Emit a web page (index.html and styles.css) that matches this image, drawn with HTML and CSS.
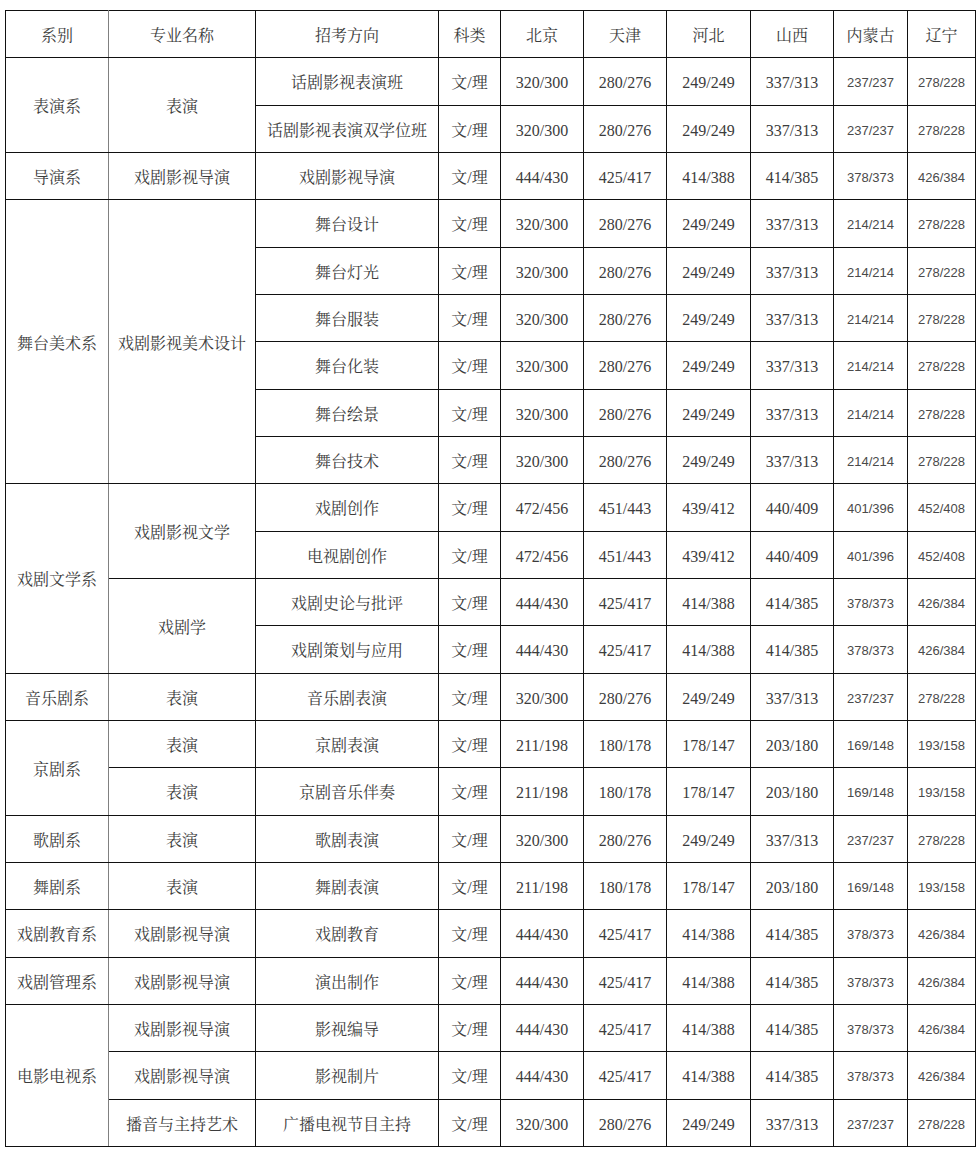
FILE: index.html
```html
<!DOCTYPE html>
<html lang="zh-CN">
<head>
<meta charset="utf-8">
<title>录取分数线</title>
<link rel="stylesheet" href="styles.css">
</head>
<body>
<table class="score">
<colgroup>
<col class="w1"><col class="w2"><col class="w3"><col class="w4"><col class="w5"><col class="w6"><col class="w7"><col class="w8"><col class="w9"><col class="w10">
</colgroup>
<tbody>
<tr><td class="c1">系别</td><td>专业名称</td><td>招考方向</td><td>科类</td><td>北京</td><td>天津</td><td>河北</td><td>山西</td><td>内蒙古</td><td>辽宁</td></tr>

<tr><td class="c1" rowspan="2">表演系</td><td rowspan="2">表演</td><td>话剧影视表演班</td><td>文/理</td><td>320/300</td><td>280/276</td><td>249/249</td><td>337/313</td><td class="sm">237/237</td><td class="sm">278/228</td></tr>
<tr><td>话剧影视表演双学位班</td><td>文/理</td><td>320/300</td><td>280/276</td><td>249/249</td><td>337/313</td><td class="sm">237/237</td><td class="sm">278/228</td></tr>

<tr><td class="c1">导演系</td><td>戏剧影视导演</td><td>戏剧影视导演</td><td>文/理</td><td>444/430</td><td>425/417</td><td>414/388</td><td>414/385</td><td class="sm">378/373</td><td class="sm">426/384</td></tr>

<tr><td class="c1" rowspan="6">舞台美术系</td><td rowspan="6">戏剧影视美术设计</td><td>舞台设计</td><td>文/理</td><td>320/300</td><td>280/276</td><td>249/249</td><td>337/313</td><td class="sm">214/214</td><td class="sm">278/228</td></tr>
<tr><td>舞台灯光</td><td>文/理</td><td>320/300</td><td>280/276</td><td>249/249</td><td>337/313</td><td class="sm">214/214</td><td class="sm">278/228</td></tr>
<tr><td>舞台服装</td><td>文/理</td><td>320/300</td><td>280/276</td><td>249/249</td><td>337/313</td><td class="sm">214/214</td><td class="sm">278/228</td></tr>
<tr><td>舞台化装</td><td>文/理</td><td>320/300</td><td>280/276</td><td>249/249</td><td>337/313</td><td class="sm">214/214</td><td class="sm">278/228</td></tr>
<tr><td>舞台绘景</td><td>文/理</td><td>320/300</td><td>280/276</td><td>249/249</td><td>337/313</td><td class="sm">214/214</td><td class="sm">278/228</td></tr>
<tr><td>舞台技术</td><td>文/理</td><td>320/300</td><td>280/276</td><td>249/249</td><td>337/313</td><td class="sm">214/214</td><td class="sm">278/228</td></tr>

<tr><td class="c1" rowspan="4">戏剧文学系</td><td rowspan="2">戏剧影视文学</td><td>戏剧创作</td><td>文/理</td><td>472/456</td><td>451/443</td><td>439/412</td><td>440/409</td><td class="sm">401/396</td><td class="sm">452/408</td></tr>
<tr><td>电视剧创作</td><td>文/理</td><td>472/456</td><td>451/443</td><td>439/412</td><td>440/409</td><td class="sm">401/396</td><td class="sm">452/408</td></tr>
<tr><td rowspan="2">戏剧学</td><td>戏剧史论与批评</td><td>文/理</td><td>444/430</td><td>425/417</td><td>414/388</td><td>414/385</td><td class="sm">378/373</td><td class="sm">426/384</td></tr>
<tr><td>戏剧策划与应用</td><td>文/理</td><td>444/430</td><td>425/417</td><td>414/388</td><td>414/385</td><td class="sm">378/373</td><td class="sm">426/384</td></tr>

<tr><td class="c1">音乐剧系</td><td>表演</td><td>音乐剧表演</td><td>文/理</td><td>320/300</td><td>280/276</td><td>249/249</td><td>337/313</td><td class="sm">237/237</td><td class="sm">278/228</td></tr>

<tr><td class="c1" rowspan="2">京剧系</td><td>表演</td><td>京剧表演</td><td>文/理</td><td>211/198</td><td>180/178</td><td>178/147</td><td>203/180</td><td class="sm">169/148</td><td class="sm">193/158</td></tr>
<tr><td>表演</td><td>京剧音乐伴奏</td><td>文/理</td><td>211/198</td><td>180/178</td><td>178/147</td><td>203/180</td><td class="sm">169/148</td><td class="sm">193/158</td></tr>

<tr><td class="c1">歌剧系</td><td>表演</td><td>歌剧表演</td><td>文/理</td><td>320/300</td><td>280/276</td><td>249/249</td><td>337/313</td><td class="sm">237/237</td><td class="sm">278/228</td></tr>

<tr><td class="c1">舞剧系</td><td>表演</td><td>舞剧表演</td><td>文/理</td><td>211/198</td><td>180/178</td><td>178/147</td><td>203/180</td><td class="sm">169/148</td><td class="sm">193/158</td></tr>

<tr><td class="c1">戏剧教育系</td><td>戏剧影视导演</td><td>戏剧教育</td><td>文/理</td><td>444/430</td><td>425/417</td><td>414/388</td><td>414/385</td><td class="sm">378/373</td><td class="sm">426/384</td></tr>

<tr><td class="c1">戏剧管理系</td><td>戏剧影视导演</td><td>演出制作</td><td>文/理</td><td>444/430</td><td>425/417</td><td>414/388</td><td>414/385</td><td class="sm">378/373</td><td class="sm">426/384</td></tr>

<tr><td class="c1" rowspan="3">电影电视系</td><td>戏剧影视导演</td><td>影视编导</td><td>文/理</td><td>444/430</td><td>425/417</td><td>414/388</td><td>414/385</td><td class="sm">378/373</td><td class="sm">426/384</td></tr>
<tr><td>戏剧影视导演</td><td>影视制片</td><td>文/理</td><td>444/430</td><td>425/417</td><td>414/388</td><td>414/385</td><td class="sm">378/373</td><td class="sm">426/384</td></tr>
<tr><td>播音与主持艺术</td><td>广播电视节目主持</td><td>文/理</td><td>320/300</td><td>280/276</td><td>249/249</td><td>337/313</td><td class="sm">237/237</td><td class="sm">278/228</td></tr>
</tbody>
</table>
</body>
</html>
```

FILE: styles.css
```css
html, body {
  margin: 0;
  padding: 0;
  background: #ffffff;
}

body {
  padding: 10px 0 0 5px;
  width: 976px;
  box-sizing: border-box;
}

.score {
  border-collapse: collapse;
  table-layout: fixed;
  width: 971px;
  font-family: "Liberation Serif", "Noto Serif CJK SC", "Noto Sans CJK SC", serif;
  font-size: 16px;
  color: #3c3c3c;
}

.score td {
  border: 1px solid #111111;
  text-align: center;
  vertical-align: middle;
  padding: 4px 0 0 0;
  white-space: nowrap;
  line-height: 20px;
}

.score tr {
  height: 47.33px;
}

.score td.c1 {
  border-right-color: #808080;
}

.score td.sm {
  font-family: "Liberation Sans", "Noto Sans CJK SC", sans-serif;
  font-size: 13px;
  color: #4a4a4a;
}

.w1 { width: 103px; }
.w2 { width: 147px; }
.w3 { width: 183px; }
.w4 { width: 62px; }
.w5 { width: 83px; }
.w6 { width: 83px; }
.w7 { width: 84px; }
.w8 { width: 83px; }
.w9 { width: 74px; }
.w10 { width: 68px; }
```
